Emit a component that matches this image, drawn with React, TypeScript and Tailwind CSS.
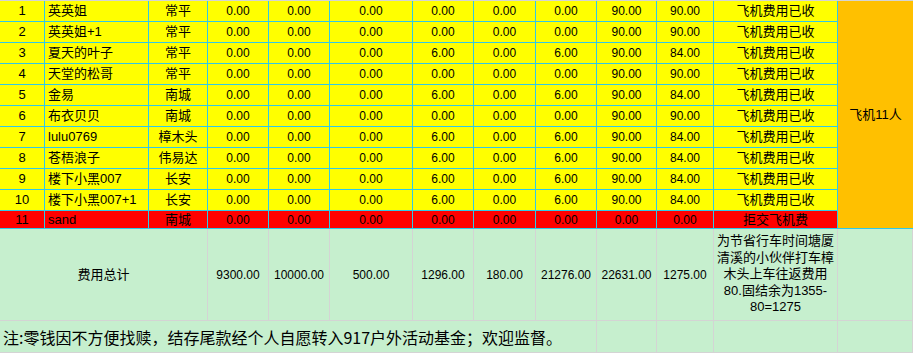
const rows: { name: string; area: string; a: string; b: string; c: string; d: string; e: string; f: string; g: string; h: string }[] = [
  { name: '英英姐', area: '常平', a: '0.00', b: '0.00', c: '0.00', d: '0.00', e: '0.00', f: '0.00', g: '90.00', h: '90.00' },
  { name: '英英姐+1', area: '常平', a: '0.00', b: '0.00', c: '0.00', d: '0.00', e: '0.00', f: '0.00', g: '90.00', h: '90.00' },
  { name: '夏天的叶子', area: '常平', a: '0.00', b: '0.00', c: '0.00', d: '6.00', e: '0.00', f: '6.00', g: '90.00', h: '84.00' },
  { name: '天堂的松哥', area: '常平', a: '0.00', b: '0.00', c: '0.00', d: '0.00', e: '0.00', f: '0.00', g: '90.00', h: '90.00' },
  { name: '金易', area: '南城', a: '0.00', b: '0.00', c: '0.00', d: '6.00', e: '0.00', f: '6.00', g: '90.00', h: '84.00' },
  { name: '布衣贝贝', area: '南城', a: '0.00', b: '0.00', c: '0.00', d: '0.00', e: '0.00', f: '0.00', g: '90.00', h: '90.00' },
  { name: 'lulu0769', area: '樟木头', a: '0.00', b: '0.00', c: '0.00', d: '6.00', e: '0.00', f: '6.00', g: '90.00', h: '84.00' },
  { name: '苍梧浪子', area: '伟易达', a: '0.00', b: '0.00', c: '0.00', d: '6.00', e: '0.00', f: '6.00', g: '90.00', h: '84.00' },
  { name: '楼下小黑007', area: '长安', a: '0.00', b: '0.00', c: '0.00', d: '6.00', e: '0.00', f: '6.00', g: '90.00', h: '84.00' },
  { name: '楼下小黑007+1', area: '长安', a: '0.00', b: '0.00', c: '0.00', d: '6.00', e: '0.00', f: '6.00', g: '90.00', h: '84.00' },
]

const totals = ['9300.00', '10000.00', '500.00', '1296.00', '180.00', '21276.00', '22631.00', '1275.00']

// cyan grid for the coloured cells, grey for the plain green ones
const cy = 'border-r border-b border-[#30c8e8] flex items-center'
const gr = 'border-r border-b border-[#d4d4d4] flex items-center bg-[#c6efce]'

function DataRow({ no, r, red }: { no: number; r: (typeof rows)[number]; red?: boolean }) {
  const bg = red ? 'bg-[#ff0000]' : 'bg-[#ffff00]'
  const nums = [r.a, r.b, r.c, r.d, r.e, r.f, r.g, r.h]
  return (
    <>
      <div className={`${cy} ${bg} justify-center text-[13px]`}>{no}</div>
      <div className={`${cy} ${bg} pl-[3px] text-[13px]`}>{r.name}</div>
      <div className={`${cy} ${bg} justify-center text-[13px]`}>{r.area}</div>
      {nums.map((n, i) => (
        <div key={i} className={`${cy} ${bg} justify-center text-[12px]`}>
          {n}
        </div>
      ))}
      <div className={`${cy} ${bg} justify-center text-[13px]`}>{red ? '拒交飞机费' : '飞机费用已收'}</div>
    </>
  )
}

export default function App() {
  return (
    <div className="w-[913px] h-[354px] bg-white text-black font-['Liberation_Sans','Noto_Sans_CJK_SC',sans-serif]">
      <div className="grid grid-cols-[45px_104px_59px_61px_61px_83px_61px_62px_61px_60px_57px_124px_75px] grid-rows-[repeat(10,21px)_18px_92px_32px] border-t border-[#d4d4d4]">
        <DataRow no={1} r={rows[0]} />
        <div className="row-span-11 border-b border-[#30c8e8] bg-[#ffc000] flex items-center justify-center text-[13px]">
          飞机11人
        </div>
        {rows.slice(1).map((r, i) => (
          <DataRow key={i} no={i + 2} r={r} />
        ))}
        <DataRow
          no={11}
          red
          r={{ name: 'sand', area: '南城', a: '0.00', b: '0.00', c: '0.00', d: '0.00', e: '0.00', f: '0.00', g: '0.00', h: '0.00' }}
        />

        <div className={`${gr} col-span-3 justify-center text-[13px]`}>费用总计</div>
        {totals.map((t) => (
          <div key={t} className={`${gr} justify-center text-[12px]`}>
            {t}
          </div>
        ))}
        <div className={`${gr} justify-center text-center text-[13px] leading-[16.6px]`}>
          <span>
            为节省行车时间塘厦
            <br />
            清溪的小伙伴打车樟
            <br />
            木头上车往返费用
            <br />
            80.固结余为1355-
            <br />
            80=1275
          </span>
        </div>
        <div className={gr} />

        <div className={`${gr} col-span-9 pl-[3px] text-[16px] font-['Noto_Sans_CJK_SC',sans-serif]`}>
          注:零钱因不方便找赎，结存尾款经个人自愿转入917户外活动基金；欢迎监督。
        </div>
        <div className={gr} />
        <div className={gr} />
        <div className={gr} />
        <div className={gr} />
      </div>
    </div>
  )
}
